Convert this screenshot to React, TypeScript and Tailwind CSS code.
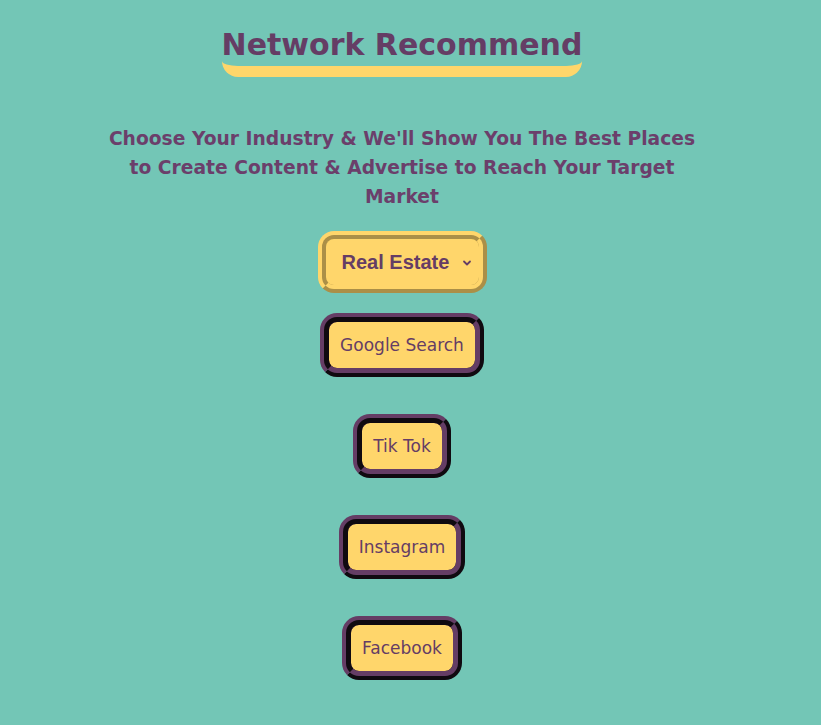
import React from "react";

const comic = { fontFamily: '"Comic Sans MS", "DejaVu Sans", sans-serif' };

function NetButton({ label }: { label: string }) {
  return (
    <button
      className="bg-[#ffd66b] text-[#653d65] text-[17px] leading-[24px] px-[11px] py-[11px] border-[9px] border-[#653d65] [border-style:ridge] rounded-[17px]"
      style={comic}
    >
      {label}
    </button>
  );
}

export default function App() {
  return (
    <div className="min-h-screen w-full bg-[#73c6b6]">
      <div className="w-[804px] flex flex-col items-center pt-[25px] pb-[40px]" style={comic}>
        <h1 className="text-[30px] leading-[40px] font-bold text-[#653d65] border-b-[11px] border-[#ffd66b] rounded-b-[16px] pb-[1px]">
          Network Recommend
        </h1>
        <p className="mt-[47px] w-[610px] text-center text-[18.7px] leading-[29px] font-bold text-[#6b3f6b]">
          Choose Your Industry &amp; We'll Show You The Best Places to Create Content &amp; Advertise to Reach Your Target Market
        </p>
        <div
          className="mt-[20px] w-[169px] h-[62px] flex items-center justify-between pl-[16px] pr-[7px] bg-[#ffd66b] border-[8px] border-[#ffd66b] [border-style:ridge] rounded-[16px] text-[#653d65]"
          style={{ fontFamily: '"Liberation Sans", Arial, sans-serif' }}
        >
          <span className="text-[20px] font-bold leading-[24px]">Real Estate</span>
          <svg width="10" height="8" viewBox="0 0 10 8" className="mt-[2px]">
            <path d="M2 2.5 L5 5.5 L8 2.5" fill="none" stroke="#653d65" strokeWidth="1.8" strokeLinecap="round" strokeLinejoin="round" />
          </svg>
        </div>
        <div className="mt-[20px] flex flex-col items-center gap-[37px]">
          <NetButton label="Google Search" />
          <NetButton label="Tik Tok" />
          <NetButton label="Instagram" />
          <NetButton label="Facebook" />
        </div>
      </div>
    </div>
  );
}
